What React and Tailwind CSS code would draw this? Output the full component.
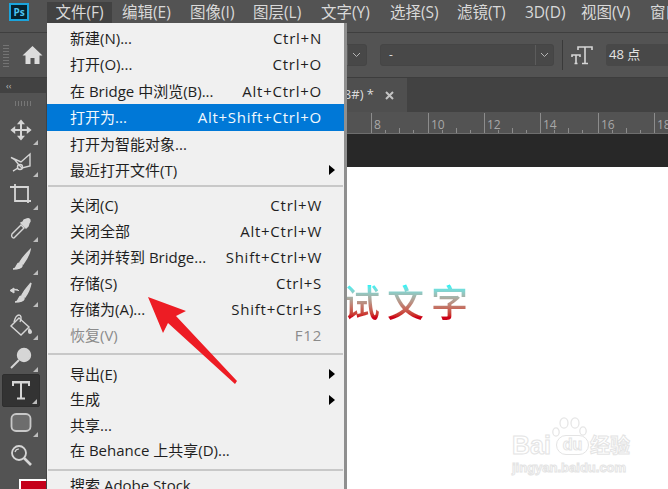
import React from 'react';

const FONT = "font-['Open_Sans','Noto_Sans_CJK_SC',sans-serif]";

const TOP_MENU = [
    { label: '编辑(E)', width: 'w-[68px]' },
    { label: '图像(I)', width: 'w-[63px]' },
    { label: '图层(L)', width: 'w-[68px]' },
    { label: '文字(Y)', width: 'w-[69px]' },
    { label: '选择(S)', width: 'w-[67px]' },
    { label: '滤镜(T)', width: 'w-[68px]' },
    { label: '3D(D)', width: 'w-[56px]' },
    { label: '视图(V)', width: 'w-[69px]' },
    { label: '窗口(W)', width: 'w-[70px]' },
];

const FILE_MENU = [
    [
        { label: '新建(N)...', keys: 'Ctrl+N' },
        { label: '打开(O)...', keys: 'Ctrl+O' },
        { label: '在 Bridge 中浏览(B)...', keys: 'Alt+Ctrl+O' },
        { label: '打开为...', keys: 'Alt+Shift+Ctrl+O', active: true },
        { label: '打开为智能对象...' },
        { label: '最近打开文件(T)', arrow: true },
    ],
    [
        { label: '关闭(C)', keys: 'Ctrl+W' },
        { label: '关闭全部', keys: 'Alt+Ctrl+W' },
        { label: '关闭并转到 Bridge...', keys: 'Shift+Ctrl+W' },
        { label: '存储(S)', keys: 'Ctrl+S' },
        { label: '存储为(A)...', keys: 'Shift+Ctrl+S' },
        { label: '恢复(V)', keys: 'F12', disabled: true },
    ],
    [
        { label: '导出(E)', arrow: true },
        { label: '生成', arrow: true },
        { label: '共享...' },
        { label: '在 Behance 上共享(D)...' },
    ],
    [{ label: '搜索 Adobe Stock...' }],
];

const ToolSvg = ({ children }) => (
    <svg width="24" height="24" viewBox="0 0 24 24" fill="none" stroke="#d6d6d6" strokeWidth="1.4">
        {children}
    </svg>
);

const TOOLS = [
    <ToolSvg key="move">
        <path d="M12 3v18M3 12h18" strokeWidth="2" />
        <path d="M9.500 5.500 12 2.500l2.500 3zM9.500 18.500l2.500 3 2.500-3zM5.500 9.500 2.500 12l3 2.500zM18.500 9.500l3 2.500-3 2.500z" fill="#d6d6d6" />
    </ToolSvg>,
    <ToolSvg key="lasso">
        <path d="M2 6.500 12 11 21 3v12l-8 2-3-3-4-5z" />
        <circle cx="11" cy="16" r="2.500" />
        <path d="M9 17c-2 1-3 2-5 3" />
    </ToolSvg>,
    <ToolSvg key="crop">
        <path d="M1 4h5M6 1v17h16M6 4h13v16" strokeWidth="1.800" />
    </ToolSvg>,
    <ToolSvg key="dropper">
        <path d="M5 22c-2 0-3-2-2-4l9-9 3 3-9 9c-.4.600-.6 1-1 1z" />
        <path d="M12 7l5 5 2-2 1-3c2-2 1-5-2-4l-3 1-1 2z" fill="#d6d6d6" />
    </ToolSvg>,
    <ToolSvg key="brush">
        <path d="M21 2c-3 3-7 7-10 12l3 2c3-4 6-9 7-14z" fill="#d6d6d6" />
        <path d="M4 21c3 0 8 0 9-3 .5-2-1-3-2.500-3-2 0-2.500 2-3.500 4-.5 1-2 2-3 2z" fill="#d6d6d6" />
    </ToolSvg>,
    <ToolSvg key="history">
        <path d="M22 2c-2 3-6 6-9 12l3 2c3-4 5-9 6-14z" fill="#d6d6d6" />
        <path d="M6 21c3 0 8 0 9-3 .5-2-1-3-2.500-3-2 0-2.500 2-3.500 4-.5 1-2 2-3 2z" fill="#d6d6d6" />
        <path d="M1 9.500 5 7v5zM4 9c2-1 5-1 6 1" fill="#d6d6d6" strokeWidth="1" />
    </ToolSvg>,
    <ToolSvg key="bucket">
        <path d="M10 5 20 14l-8 8-10-9z" />
        <path d="M5 9c1-4 3-7 5-7 2 0 3 3 1 7" />
        <path d="M20 15c2 1 3 3 3 4s-1 2-2 2-2-1-2-2 0-3 1-4z" fill="#d6d6d6" stroke="none" />
    </ToolSvg>,
    <ToolSvg key="dodge">
        <circle cx="15" cy="9" r="6.500" fill="#d6d6d6" />
        <path d="M10 14 2 22" strokeWidth="2" />
    </ToolSvg>,
    <ToolSvg key="type">
        <path d="M4 8V4h16v4M4 4.500h16M12 4v16M8 20.500h8" strokeWidth="2" />
    </ToolSvg>,
    <ToolSvg key="shape">
        <rect x="2.500" y="3" width="19" height="17" rx="4.500" fill="#6d6d6d" strokeWidth="1.800" stroke="#c8c8c8" />
    </ToolSvg>,
    <ToolSvg key="zoom">
        <circle cx="10" cy="10" r="7" strokeWidth="1.800" />
        <path d="M15 15l7 7" strokeWidth="2.600" />
        <path d="M6 9c.5-2 2-3 4-3" strokeWidth="1.200" />
    </ToolSvg>,
];

const Corner = () => (
    <span className="absolute right-[2px] bottom-[2px] h-0 w-0 border-b-[5px] border-l-[5px] border-b-[#bdbdbd] border-l-transparent" />
);

const Toolbar = () => (
    <div className="flex w-[47px] flex-none flex-col overflow-hidden bg-[#535353] border-r border-[#444444]">
        <div className="flex h-[15px] flex-none items-center bg-[#424242] pl-[6px] text-[9px] leading-none text-[#bdbdbd]">‹‹</div>
        <div className="flex h-[21px] flex-none items-center justify-center">
            <div className="h-[5px] w-[16px] bg-[repeating-linear-gradient(90deg,#777777_0,#777777_1px,transparent_1px,transparent_3px)]" />
        </div>
        <div className="flex flex-none flex-col px-[2px]">
            {TOOLS.map((icon, i) => (
                <div
                    key={i}
                    className={`relative flex h-[32.500px] w-[38px] flex-none items-center justify-center rounded-[2px] ${i === 8 ? 'bg-[#333333] border border-[#2e2e2e]' : ''}`}
                >
                    {icon}
                    {i !== 10 && <Corner />}
                </div>
            ))}
        </div>
        <div className="mt-[7px] ml-[19px] h-[20px] w-[28px] flex-none border-l-2 border-t-2 border-white bg-[#c5001a]" />
    </div>
);

const Select = ({ className, text }) => (
    <div className={`flex h-[22px] flex-none items-center rounded-[3px] border border-[#454545] bg-[#484848] ${className}`}>
        <span className="flex-1 pl-[8px] text-[12px] text-[#dddddd]">{text}</span>
        <span className="flex h-full w-[18px] flex-none items-center justify-center border-l border-[#5c5c5c]">
            <svg width="9" height="6" viewBox="0 0 9 6" fill="none" stroke="#b5b5b5"><path d="M1 1l3.500 3.500L8 1" /></svg>
        </span>
    </div>
);

const OptionsBar = () => (
    <div className="flex h-[45px] flex-none items-center bg-[#535353] border-b border-[#3d3d3d]">
        <div className="ml-[3px] h-[24px] w-[6px] flex-none bg-[repeating-linear-gradient(0deg,#747474_0,#747474_1px,transparent_1px,transparent_3px)]" />
        <svg className="ml-[13px] flex-none" width="21" height="20" viewBox="0 0 21 20" fill="#dcdcdc">
            <path d="M10.500 1 0.500 10.500h3V19h5v-6h4v6h5v-8.500h3z" />
        </svg>
        <Select className="ml-[303px] w-[21px] [&>span:first-child]:hidden" text="" />
        <Select className="ml-[13px] w-[174px]" text="-" />
        <div className="ml-[8px] h-[30px] w-px flex-none bg-[#3a3a3a]" />
        <svg className="ml-[8px] flex-none" width="22" height="20" viewBox="0 0 22 20" fill="none" stroke="#d6d6d6" strokeWidth="1.600">
            <path d="M7 5V2h14v3M14 2v16M11 18.500h6M1 12v-2h8v2M5 10v8.500M3.500 18.500h3" />
        </svg>
        <div className="ml-[13px] flex h-[22px] flex-1 items-center rounded-l-[3px] bg-[#484848] pl-[3px] text-[13px] text-[#e4e4e4]">48 点</div>
    </div>
);

const RULER = [
    { x: 371, n: '8' },
    { x: 428, n: '10' },
    { x: 484, n: '12' },
    { x: 540, n: '14' },
    { x: 598, n: '16' },
    { x: 654, n: '18' },
];

// ruler coordinates are page x, the strip begins at 47
const Ruler = () => (
    <svg className="block flex-none" width="621" height="22" viewBox="47 0 621 22">
        <rect x="47" y="0" width="621" height="22" fill="#535353" />
        <line x1="47" x2="668" y1="21.500" y2="21.500" stroke="#6e6e6e" />
        {RULER.map(({ x, n }) => (
            <g key={n}>
                <line x1={x + 0.5} x2={x + 0.5} y1="1" y2="21" stroke="#8c8c8c" />
                <line x1={x + 14.5} x2={x + 14.5} y1="18" y2="21" stroke="#8c8c8c" />
                <line x1={x + 28.5} x2={x + 28.5} y1="16" y2="21" stroke="#8c8c8c" />
                <line x1={x + 42.5} x2={x + 42.5} y1="18" y2="21" stroke="#8c8c8c" />
                <text x={x + 3} y="17" fontSize="12" fill="#a8a8a8" fontFamily="Open Sans">{n}</text>
            </g>
        ))}
    </svg>
);

const MenuRow = ({ item, height }) => (
    <div
        className={`relative flex flex-none items-center justify-between whitespace-nowrap pl-[23px] pr-[22px] text-[15px] ${height} ${
            item.active ? 'bg-[#0078d7] text-[#f2f8fd]' : item.disabled ? 'text-[#8b8b8b]' : 'text-[#1f1f1f]'
        }`}
    >
        <span>{item.label}</span>
        {item.keys && <span className="tracking-[0.75px]">{item.keys}</span>}
        {item.arrow && (
            <span className="absolute right-[9px] top-1/2 h-0 w-0 -translate-y-1/2 border-y-[5px] border-l-[6px] border-y-transparent border-l-black" />
        )}
    </div>
);

const ROW_HEIGHTS = ['h-[26.400px]', 'h-[26px]', 'h-[25.500px]', 'h-[26px]'];
const SEPARATORS = ['', 'mt-[2px] mb-[5px]', 'mt-[5px] mb-[6px]', 'mt-[6px] mb-[1px]'];

const FileMenu = () => (
    <div className="absolute left-[47px] top-[23px] h-[480px] w-[300px] border-r-[3px] border-[#8f8f8f] bg-[#f0f0f0] pt-[2px]">
        {FILE_MENU.map((group, g) => (
            <div key={g}>
                {g > 0 && <div className={`mx-[1px] h-[2px] bg-[#c8c8c8] ${SEPARATORS[g]}`} />}
                {group.map((item) => (
                    <MenuRow key={item.label} item={item} height={ROW_HEIGHTS[g]} />
                ))}
            </div>
        ))}
    </div>
);

const Watermark = () => (
    <div className="absolute left-[512px] top-[417px] flex h-[58px] w-[120px] flex-col items-start whitespace-nowrap font-['Liberation_Sans',sans-serif] text-white [-webkit-text-stroke:1px_#e4e4e4]">
        <svg className="absolute left-[40px] top-0" width="36" height="22" viewBox="0 0 36 22" fill="none" stroke="#e6e6e6" strokeWidth="1.300">
            <ellipse cx="4" cy="15" rx="3.200" ry="4.200" />
            <ellipse cx="12" cy="6" rx="4" ry="5.200" />
            <ellipse cx="23" cy="6" rx="4" ry="5.200" />
            <ellipse cx="31" cy="14" rx="3.200" ry="4.200" />
        </svg>
        <div className="mt-[17px] flex flex-none items-center text-[25px] font-bold leading-[22px]">
            <span>Bai</span>
            <span className="ml-[5px] flex h-[20px] w-[33px] flex-none items-center justify-center rounded-full border border-[#e4e4e4] text-[16px]">du</span>
            <span className="ml-[1px] font-['Noto_Sans_CJK_SC',sans-serif] text-[20px] font-bold">经验</span>
        </div>
        <div className="mt-[5px] text-[13px] font-bold leading-[14px]">jingyan.baidu.com</div>
    </div>
);

const App = () => (
    <div className={`relative flex h-[489px] w-[668px] flex-col overflow-hidden bg-white ${FONT}`}>
        {/* Menu bar */}
        <div className="flex h-[33px] flex-none items-start bg-[#535353] border-b border-[#3f3f3f] text-[15.500px] text-[#d9d9d9]">
            <div className="ml-[9px] mt-[3px] flex h-[18px] w-[20px] flex-none items-center justify-center border-2 border-[#1ba4dc] bg-[#04222f] text-[10px] font-bold leading-none text-[#4cc4f0]">Ps</div>
            <div className="ml-[18px] mt-[2px] flex h-[21px] w-[65px] flex-none items-center justify-center bg-[#424242]">文件(F)</div>
            <div className="flex flex-none">
                <div className="w-[10px] flex-none" />
                {TOP_MENU.map((m) => (
                    <div key={m.label} className={`mt-[2px] flex h-[21px] flex-none items-center whitespace-nowrap ${m.width}`}>{m.label}</div>
                ))}
            </div>
        </div>

        <OptionsBar />

        <div className="flex min-h-0 flex-1">
            <Toolbar />
            <div className="flex min-w-0 flex-1 flex-col">
                {/* Tab strip */}
                <div className="flex h-[34px] flex-none justify-start bg-[#424242]">
                    <div className="flex w-[360px] flex-none items-center justify-end bg-[#4f4f4f] pr-[13px] text-[13px] text-[#dcdcdc]">
                        <span>8#) *</span>
                        <svg className="ml-[11px] flex-none" width="9" height="9" viewBox="0 0 9 9" stroke="#c4c4c4" strokeWidth="2"><path d="M1 1l7 7M8 1 1 8" /></svg>
                    </div>
                </div>
                <Ruler />
                <div className="h-[33px] flex-none bg-[#282828]" />
                {/* Canvas */}
                <div className="flex-1 bg-white pl-[252px] pt-[111px]">
                    <div className="w-fit whitespace-nowrap bg-gradient-to-b from-[#00f6fa] from-15% to-[#cc0018] to-85% bg-clip-text font-['Noto_Sans_CJK_SC',sans-serif] text-[37px] font-medium leading-[46px] tracking-[7px] text-transparent">
                        测试文字
                    </div>
                </div>
            </div>
        </div>

        <FileMenu />

        {/* Red annotation arrow */}
        <svg className="absolute left-0 top-0" width="668" height="489" viewBox="0 0 668 489">
            <polygon points="148,297 186,311 176,316 237,381 235,384 168,323 163,333" fill="#ed1c24" />
        </svg>

        <Watermark />
    </div>
);

export default App;
